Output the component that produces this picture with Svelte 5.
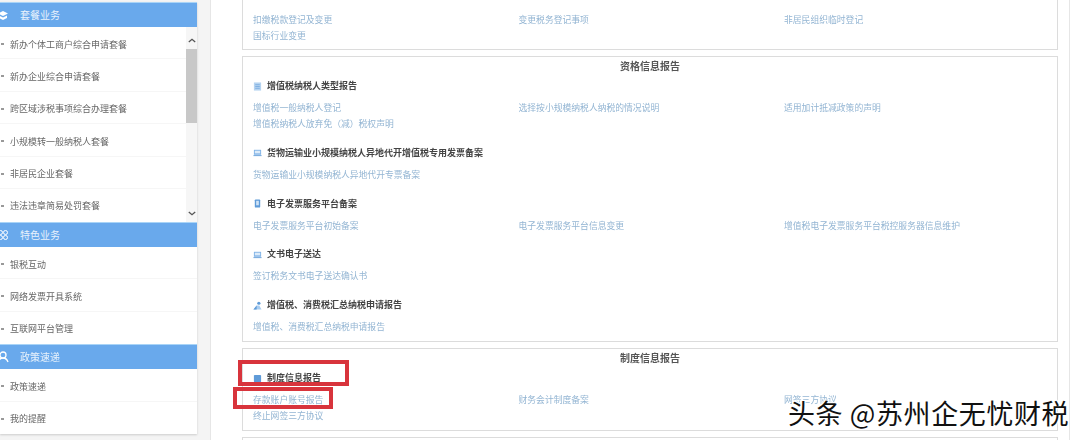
<script>
  const menus = [
    {
      title: "套餐业务",
      icon: "box",
      scroll: true,
      items: ["新办个体工商户综合申请套餐", "新办企业综合申请套餐", "跨区域涉税事项综合办理套餐", "小规模转一般纳税人套餐", "非居民企业套餐", "违法违章简易处罚套餐"],
    },
    { title: "特色业务", icon: "grid", items: ["银税互动", "网络发票开具系统", "互联网平台管理"] },
    { title: "政策速递", icon: "user", items: ["政策速递", "我的提醒"] },
  ];

  const cards = [
    {
      title: "资格信息报告",
      sections: [
        { title: "增值税纳税人类型报告", icon: "doc", links: ["增值税一般纳税人登记", "选择按小规模纳税人纳税的情况说明", "适用加计抵减政策的声明", "增值税纳税人放弃免（减）税权声明"] },
        { title: "货物运输业小规模纳税人异地代开增值税专用发票备案", icon: "screen", links: ["货物运输业小规模纳税人异地代开专票备案"] },
        { title: "电子发票服务平台备案", icon: "phone", links: ["电子发票服务平台初始备案", "电子发票服务平台信息变更", "增值税电子发票服务平台税控服务器信息维护"] },
        { title: "文书电子送达", icon: "screen", links: ["签订税务文书电子送达确认书"] },
        { title: "增值税、消费税汇总纳税申请报告", icon: "person", links: ["增值税、消费税汇总纳税申请报告"] },
      ],
    },
    {
      title: "制度信息报告",
      sections: [
        { title: "制度信息报告", icon: "square", links: ["存款账户账号报告", "财务会计制度备案", "网签三方协议", "终止网签三方协议"] },
      ],
    },
  ];
</script>

<div class="page">
  <div class="left">
    <aside class="sidebar">
      {#each menus as menu}
        <div class="menu-head">
          <svg class="menu-icon" viewBox="0 0 12 12" width="12" height="12">
            {#if menu.icon === "box"}
              <path d="M6 2 11 4.500 6 7 1 4.500Z M2 6.500 6 8.500 10 6.500V9L6 11 2 9Z" fill="#fff" />
            {:else if menu.icon === "grid"}
              <g fill="none" stroke="#fff" stroke-width="1">
                <circle cx="3.500" cy="3.500" r="2" /><circle cx="8.500" cy="3.500" r="2" />
                <circle cx="3.500" cy="8.500" r="2" /><circle cx="8.500" cy="8.500" r="2" />
              </g>
            {:else}
              <g fill="none" stroke="#fff" stroke-width="1.300">
                <circle cx="6" cy="4" r="3" /><path d="M1 11c1-3 3-4 5-4s4 1 5 4" />
              </g>
            {/if}
          </svg>
          <span>{menu.title}</span>
        </div>
        <div class="menu-body" class:scroll={menu.scroll}>
          <ul>
            {#each menu.items as item}
              <li><i></i>{item}</li>
            {/each}
          </ul>
          {#if menu.scroll}
            <div class="scrollbar">
              <svg viewBox="0 0 10 6" width="8" height="5"><path d="M1 5 5 1.500 9 5" fill="none" stroke="#555" stroke-width="1.600" /></svg>
              <span class="thumb"></span>
              <svg viewBox="0 0 10 6" width="8" height="5"><path d="M1 1 5 4.500 9 1" fill="none" stroke="#555" stroke-width="1.600" /></svg>
            </div>
          {/if}
        </div>
      {/each}
    </aside>
  </div>

  <main class="panel">
    <section class="card first">
      <div class="links">
        <a>扣缴税款登记及变更</a><a>变更税务登记事项</a><a>非居民组织临时登记</a><a>国标行业变更</a>
      </div>
    </section>

    {#each cards as card}
      <section class="card">
        <h2>{card.title}</h2>
        {#each card.sections as sec}
          <h3>
            <svg viewBox="0 0 10 10" width="9" height="9">
              {#if sec.icon === "doc"}
                <path d="M1 0.500h8v9H1z" fill="#b5d3f0" /><path d="M2.500 3h5M2.500 5h5M2.500 7h5" stroke="#6ea5dc" stroke-width=".8" />
              {:else if sec.icon === "screen"}
                <path d="M1 2h8v5.500H1z" fill="#7fb2e6" /><path d="M2 3h6v3H2z" fill="#dcebf9" /><path d="M0.500 8h9v1h-9z" fill="#5f9bd8" />
              {:else if sec.icon === "phone"}
                <rect x="2" y="0.500" width="6" height="9" rx="1" fill="#5f9bd8" /><path d="M3.500 2h3v5h-3z" fill="#cfe3f7" />
              {:else if sec.icon === "person"}
                <circle cx="6.500" cy="2.500" r="1.800" fill="#5f9bd8" /><path d="M0.500 9.500 4 5h3l2.500 4.500z" fill="#a9cdf0" /><path d="M0.500 9.500 4 5v4.500z" fill="#5f9bd8" />
              {:else}
                <rect x="1" y="1" width="8" height="8" rx="1" fill="#5f9bd8" />
              {/if}
            </svg>
            {sec.title}
          </h3>
          <div class="links">
            {#each sec.links as link}
              <a>{link}</a>
            {/each}
          </div>
        {/each}
      </section>
    {/each}
    <section class="card last"></section>
  </main>

  <div class="mark one"></div>
  <div class="mark two"></div>
  <div class="watermark">头条 @苏州企无忧财税</div>
</div>

<style>
  :global(body) {
    margin: 0;
    background: #fff;
  }

  .page {
    position: relative;
    width: 1080px;
    height: 440px;
    overflow: hidden;
    display: flex;
    background: #fff;
    font-family: "Noto Sans CJK SC", "Liberation Sans", sans-serif;
  }

  .left {
    width: 210px;
    flex: none;
    background: #f4f4f4;
    padding-top: 2px;
    box-sizing: border-box;
  }

  .sidebar {
    width: 197px;
    height: 432px;
    background: #fff;
    box-shadow: 0 1px 2px #ccc;
    filter: blur(0.5px);
  }

  .menu-head {
    height: 24px;
    line-height: 23px;
    border-top: 1px solid #a9d4f7;
    background: #69a9ec;
    color: #e8f2fc;
    font-size: 10px;
    padding-left: 20px;
    position: relative;
  }

  .menu-icon {
    position: absolute;
    left: -3px;
    top: 6px;
  }

  .menu-body {
    position: relative;
  }

  .menu-body.scroll {
    height: 195px;
    overflow: hidden;
  }

  ul {
    list-style: none;
    margin: 0;
    padding: 0;
  }

  li {
    height: 32.4px;
    line-height: 32.4px;
    box-sizing: border-box;
    padding: 1.5px 0 0 10px;
    font-size: 9px;
    color: #666;
    border-bottom: 1px solid #f6f6f6;
    position: relative;
  }

  li:last-child {
    border-bottom: 0;
  }

  li i {
    position: absolute;
    left: 1px;
    top: 16px;
    width: 3px;
    height: 2px;
    background: #999;
  }

  .scrollbar {
    position: absolute;
    top: 0;
    right: 0;
    bottom: 0;
    width: 11px;
    background: #f6f6f6;
    display: flex;
    flex-direction: column;
    align-items: center;
    justify-content: space-between;
    padding: 11px 0 6px;
    box-sizing: border-box;
  }

  .thumb {
    position: absolute;
    top: 22px;
    left: 0;
    right: 0;
    height: 74px;
    background: #c8c8c8;
  }

  .panel {
    width: 860px;
    height: 440px;
    flex: none;
    padding: 0 11px 0 31px;
    box-sizing: border-box;
    border-left: 1px solid #e6e6e6;
    border-right: 1px solid #e6e6e6;
    background: #fff;
    filter: blur(0.5px);
  }

  .card {
    width: 816px;
    box-sizing: border-box;
    border: 1px solid #dcdcdc;
    padding: 0 10px;
    margin-bottom: 6px;
    height: 286px;
  }

  .card.first {
    height: 50px;
    border-top: 0;
    padding-top: 6px;
  }

  .card:nth-child(3) {
    height: 83px;
  }

  h2 {
    margin: 0;
    height: 18px;
    line-height: 18px;
    text-align: center;
    font-size: 10px;
    font-weight: 700;
    color: #555;
  }

  h3 {
    margin: 3px 0 0;
    height: 16px;
    line-height: 16px;
    font-size: 9px;
    font-weight: 700;
    color: #444;
    display: flex;
    align-items: center;
    gap: 5px;
  }

  .links {
    display: grid;
    grid-template-columns: 265.5px 265.5px 1fr;
    grid-auto-rows: 16px;
    margin: 6px 0 12.75px;
    font-size: 8.8px;
    line-height: 16px;
    color: #93b5d3;
  }

  .mark {
    position: absolute;
    border: 4px solid #d8343c;
    box-sizing: border-box;
  }

  .mark.one {
    left: 238px;
    top: 360px;
    width: 111px;
    height: 26px;
  }

  .mark.two {
    left: 233px;
    top: 387px;
    width: 100px;
    height: 22px;
  }

  .watermark {
    position: absolute;
    left: 788px;
    top: 394px;
    font-size: 27px;
    line-height: 38px;
    letter-spacing: 0.6px;
    font-weight: 400;
    color: #111;
    white-space: nowrap;
    text-shadow: 1px 1px 1px #fff, -1px -1px 1px #fff, 1px -1px 1px #fff, -1px 1px 1px #fff;
  }
</style>
